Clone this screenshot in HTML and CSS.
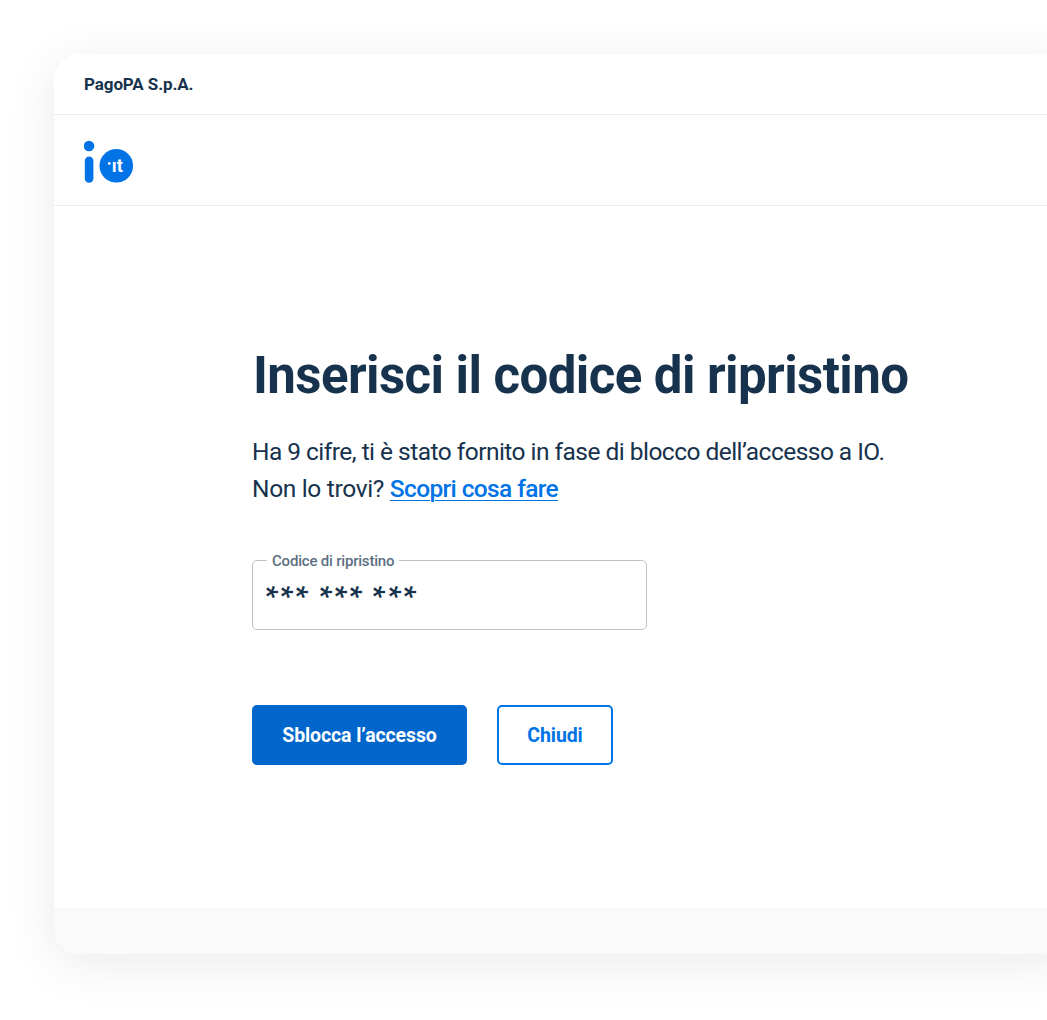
FILE: index.html
```html
<!DOCTYPE html>
<html lang="it">
<head>
<meta charset="utf-8">
<title>Inserisci il codice di ripristino</title>
<link rel="stylesheet" href="styles.css">
</head>
<body>
<div class="window">
  <div class="topbar"><span class="company">PagoPA S.p.A.</span></div>
  <header class="brandbar">
    <svg class="logo" width="50" height="44" viewBox="0 0 50 44" role="img" aria-label="IO">
      <circle cx="5" cy="6" r="5.3"/>
      <rect x="0.8" y="16.4" width="8.6" height="26.4" rx="4.3"/>
      <circle cx="32.3" cy="25.8" r="16.8"/>
      <circle class="logo-mark" cx="25.3" cy="23.4" r="1.4"/>
      <text class="logo-mark" x="27.8" y="32">ıt</text>
    </svg>
  </header>
  <main class="content">
    <h1 class="title">Inserisci il codice di ripristino</h1>
    <p class="intro">Ha 9 cifre, ti è stato fornito in fase di blocco dell’accesso a IO.<br><span class="question">Non lo trovi? </span><a class="link" href="#">Scopri cosa fare</a></p>
    <fieldset class="field">
      <legend class="label">Codice di ripristino</legend>
      <div class="code">
        <span class="group"><i>*</i><i>*</i><i>*</i></span>
        <span class="group"><i>*</i><i>*</i><i>*</i></span>
        <span class="group"><i>*</i><i>*</i><i>*</i></span>
      </div>
    </fieldset>
    <div class="actions">
      <button class="button primary">Sblocca l’accesso</button>
      <button class="button outline">Chiudi</button>
    </div>
  </main>
  <footer class="footer"></footer>
</div>
</body>
</html>
```
FILE: styles.css
```css
* { box-sizing: border-box; }
body {
  margin: 0;
  padding: 54px 0 0 54px;
  height: 1020px;
  overflow: hidden;
  background: #fff;
  color: #17324d;
  font-family: Roboto, "Liberation Sans", sans-serif;
}
.window {
  width: 1022px;
  height: 900px;
  display: flex;
  flex-direction: column;
  overflow: hidden;
  border-radius: 26px;
  background: #fff;
  box-shadow: 0 9px 50px rgba(0, 0, 0, 0.085);
}
.topbar {
  height: 61px;
  padding: 0 30px;
  display: flex;
  align-items: center;
  border-bottom: 1px solid #ebebeb;
}
.company { font-size: 17px; font-weight: 700; letter-spacing: -0.1px; }
.brandbar {
  height: 91px;
  padding: 25px 30px 0;
  border-bottom: 1px solid #ebebeb;
}
.logo { display: block; fill: #0073e6; }
.logo-mark { fill: #fff; font-size: 18px; font-weight: 700; }
.content { flex: 1; padding: 138px 0 0 199px; }
.title {
  margin: 0;
  font-size: 51px;
  line-height: 64px;
  font-weight: 700;
  letter-spacing: -0.58px;
  white-space: nowrap;
}
.intro {
  margin: 25px 0 0 -1px;
  font-size: 24.5px;
  line-height: 37px;
  letter-spacing: -0.53px;
  white-space: nowrap;
}
.question { letter-spacing: -0.33px; }
.link {
  color: #0073e6;
  font-weight: 500;
  letter-spacing: -0.63px;
  text-decoration-thickness: 1px;
  text-underline-offset: 3px;
}
.field {
  width: 395px;
  height: 81px;
  margin: 42px 0 0 -1px;
  padding: 13px 6px 0;
  border: 1px solid #c2c2c2;
  border-radius: 5px;
}
.label {
  margin-left: 8px;
  padding: 2px 5px 0;
  font-size: 15px;
  line-height: 20px;
  font-weight: 500;
  letter-spacing: -0.2px;
  color: #5c6f82;
}
.code { display: flex; gap: 8.1px; }
.group { display: flex; }
.code i {
  width: 15.2px;
  font-style: normal;
  font-size: 28px;
  font-weight: 700;
  line-height: 18px;
  transform: rotate(90deg);
}
.actions { display: flex; gap: 30px; margin: 75px 0 0 -1px; }
.button {
  height: 60px;
  padding: 0;
  border: 0;
  border-radius: 5px;
  font-family: inherit;
  font-size: 19.5px;
  font-weight: 700;
  letter-spacing: -0.1px;
}
.primary { width: 215px; background: #06c; color: #fff; }
.outline { width: 116px; border: 2px solid #0073e6; background: #fff; color: #0073e6; }
.footer { height: 46px; background: #fafafa; }
```
